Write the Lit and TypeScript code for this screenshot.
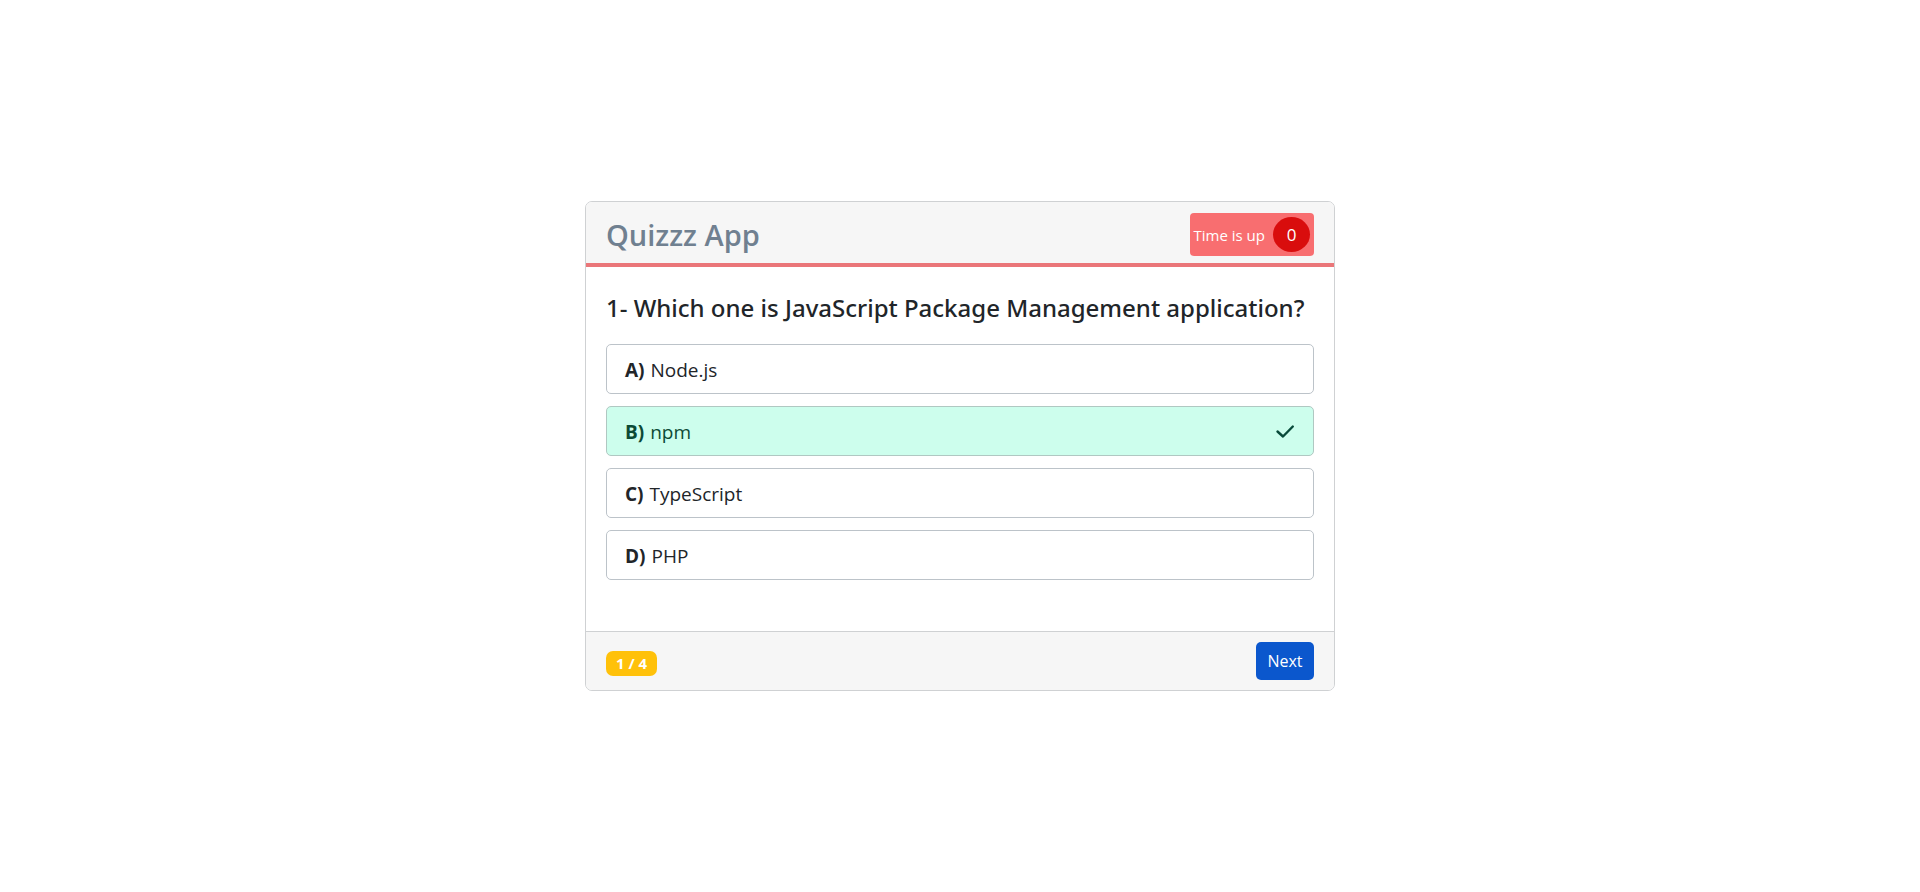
import { LitElement, html, css, nothing } from "lit";
import { customElement, property } from "lit/decorators.js";
import { classMap } from "lit/directives/class-map.js";

interface Option {
  key: string;
  text: string;
  correct?: boolean;
}

const OPTIONS: Option[] = [
  { key: "A", text: "Node.js" },
  { key: "B", text: "npm", correct: true },
  { key: "C", text: "TypeScript" },
  { key: "D", text: "PHP" },
];

@customElement("quiz-option")
class QuizOption extends LitElement {
  @property({ attribute: false }) option!: Option;

  static styles = css`
    :host {
      display: block;
    }
    .option {
      box-sizing: border-box;
      width: 100%;
      min-height: 50px;
      display: flex;
      align-items: center;
      justify-content: space-between;
      padding: 1px 18px 0;
      border: 1px solid #bcc3c9;
      border-radius: 5px;
      background: #fff;
      color: #212529;
      font: inherit;
      font-size: 19px;
      line-height: 28px;
      text-align: left;
      cursor: pointer;
    }
    .correct {
      background: #cdfeed;
      border-color: #b0c8c2;
      color: #0c4a35;
    }
    .key {
      margin-right: 1px;
      font-weight: 700;
    }
    .check {
      width: 20px;
      height: 20px;
      fill: none;
      stroke: #084a3a;
      stroke-width: 2.4;
      stroke-linecap: round;
      stroke-linejoin: round;
    }
  `;

  render() {
    const { key, text, correct } = this.option;
    return html`
      <button type="button" class=${classMap({ option: true, correct: !!correct })}>
        <span><span class="key">${key})</span> ${text}</span>
        ${correct
          ? html`<svg class="check" viewBox="0 0 20 20" aria-hidden="true">
              <path d="M2.5 9.5 L8 14.5 L17.8 4.5" />
            </svg>`
          : nothing}
      </button>
    `;
  }
}

@customElement("app-root")
class AppRoot extends LitElement {
  static styles = css`
    :host {
      display: flex;
      align-items: center;
      justify-content: center;
      min-height: 100vh;
      background: #fff;
      color: #212529;
      font-family: "Open Sans", "Noto Sans", sans-serif;
      font-size: 16px;
    }
    .card {
      box-sizing: border-box;
      width: 100%;
      max-width: 750px;
      border: 1px solid #cfd1d3;
      border-radius: 7px;
      overflow: hidden;
      background: #fff;
    }
    .header {
      display: flex;
      align-items: center;
      justify-content: space-between;
      padding: 11px 20px 7px;
      background: #f6f6f6;
      border-bottom: 4px solid #ea7679;
    }
    .title {
      margin: 0;
      font-size: 29px;
      font-weight: 600;
      line-height: 43px;
      color: #708090;
    }
    .timer {
      display: flex;
      align-items: center;
      gap: 8px;
      padding: 4px;
      border-radius: 4px;
      background: #f86e70;
      color: #fff;
      font-size: 15px;
    }
    .seconds {
      width: 37px;
      line-height: 35px;
      border-radius: 50%;
      background: #d90d0d;
      text-align: center;
      font-size: 17px;
    }
    .body {
      padding: 20px 20px 51px;
    }
    .question {
      margin: 0 0 15px;
      font-family: "Noto Sans", "Open Sans", sans-serif;
      font-size: 24px;
      font-weight: 500;
      line-height: 42px;
    }
    .options {
      display: grid;
      gap: 12px;
      margin: 0;
      padding: 0;
      list-style: none;
    }
    .footer {
      display: flex;
      align-items: center;
      justify-content: space-between;
      padding: 10px 20px;
      border-top: 1px solid #cfd1d3;
      background: #f6f6f6;
    }
    .progress {
      margin-top: 5px;
      padding: 0 10px;
      border-radius: 7px;
      background: #ffc10a;
      color: #fff;
      font-size: 15px;
      font-weight: 700;
      line-height: 25px;
    }
    .next {
      min-width: 58px;
      padding: 0 11px;
      border: 0;
      border-radius: 5px;
      background: #0b57cd;
      color: #fff;
      font: inherit;
      line-height: 38px;
      cursor: pointer;
    }
  `;

  render() {
    return html`
      <main class="card">
        <header class="header">
          <h1 class="title">Quizzz App</h1>
          <div class="timer" role="timer">
            <span>Time is up</span>
            <span class="seconds">0</span>
          </div>
        </header>
        <section class="body">
          <h2 class="question">1- Which one is JavaScript Package Management application?</h2>
          <ul class="options">
            ${OPTIONS.map((o) => html`<li><quiz-option .option=${o}></quiz-option></li>`)}
          </ul>
        </section>
        <footer class="footer">
          <span class="progress">1 / 4</span>
          <button type="button" class="next">Next</button>
        </footer>
      </main>
    `;
  }
}
